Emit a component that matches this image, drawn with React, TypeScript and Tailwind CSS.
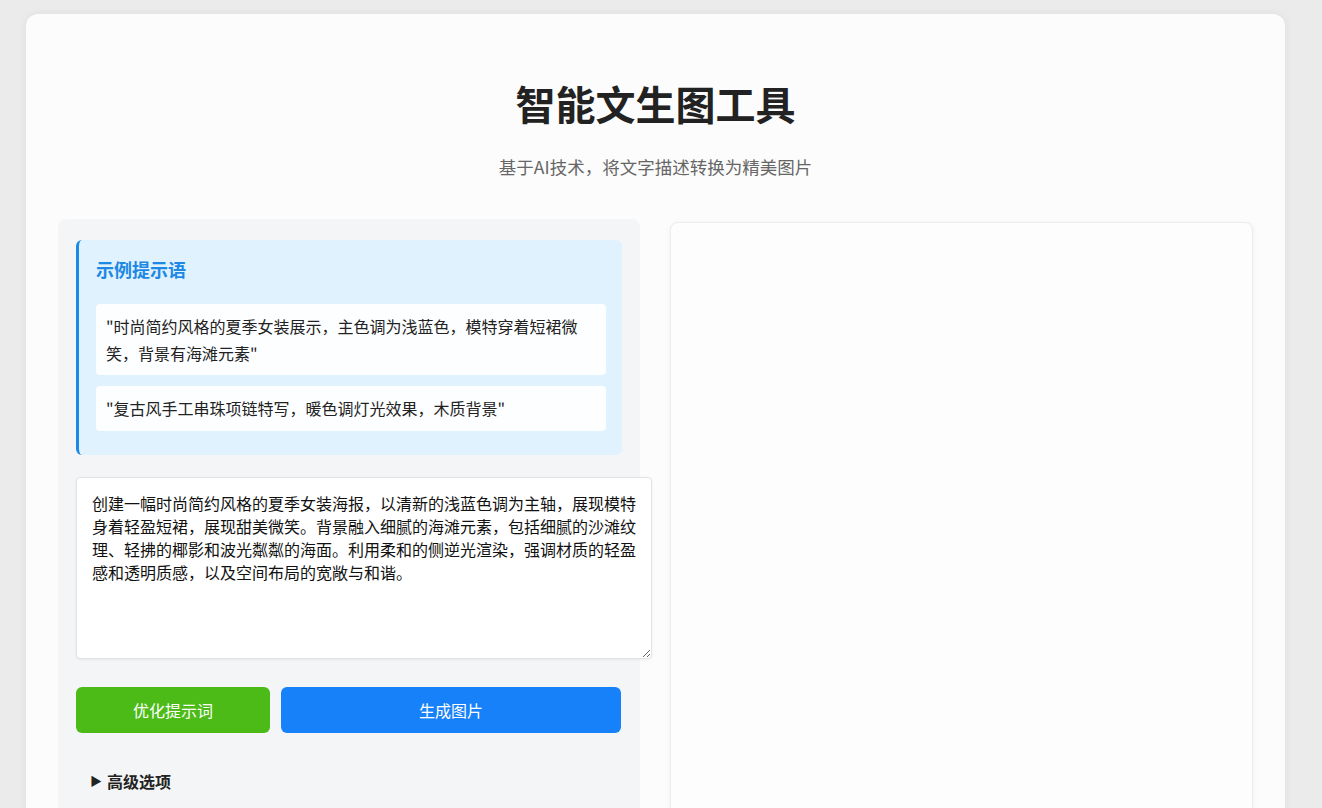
const examples = [
  '"时尚简约风格的夏季女装展示，主色调为浅蓝色，模特穿着短裙微笑，背景有海滩元素"',
  '"复古风手工串珠项链特写，暖色调灯光效果，木质背景"',
];

const prompt =
  "创建一幅时尚简约风格的夏季女装海报，以清新的浅蓝色调为主轴，展现模特身着轻盈短裙，展现甜美微笑。背景融入细腻的海滩元素，包括细腻的沙滩纹理、轻拂的椰影和波光粼粼的海面。利用柔和的侧逆光渲染，强调材质的轻盈感和透明质感，以及空间布局的宽敞与和谐。";

export default function App() {
  return (
    <div
      className="min-h-screen overflow-hidden bg-[#ebebeb] pt-[14px]"
      style={{ fontFamily: '"Noto Sans CJK SC", "Noto Sans", sans-serif' }}
    >
      <div className="ml-[26px] w-[1259px] rounded-[12px] bg-[#fcfcfc] px-[32px] pt-[65px] pb-[40px] shadow-[0_0_10px_rgba(0,0,0,0.06)]">
        <h1 className="text-center text-[40px] leading-[48px] font-bold text-[#222]">智能文生图工具</h1>
        <p className="mt-[28px] text-center text-[17.5px] leading-[24px] text-[#666]">
          基于AI技术，将文字描述转换为精美图片
        </p>

        <div className="mt-[40px] grid grid-cols-[582px_583px] gap-[30px]">
          <div className="rounded-[8px] bg-[#f4f5f6] px-[18px] pt-[21px] pb-[60px]">
            <div className="rounded-[6px] border-l-[3px] border-[#1e88e5] bg-[#dff2fd] pt-[16px] pr-[16px] pb-[24px] pl-[17px]">
              <h3 className="text-[18px] leading-[27px] font-bold text-[#1e88e5]">示例提示语</h3>
              <div className="mt-[21px] flex flex-col gap-[11px]">
                {examples.map((t, i) => (
                  <div
                    key={i}
                    className={`rounded-[4px] bg-[#fdfeff] pl-[10px] pr-[22px] text-[16px] leading-[27px] text-[#222] ${
                      i === 0 ? "py-[8.5px]" : "py-[9px]"
                    }`}
                  >
                    {t}
                  </div>
                ))}
              </div>
            </div>

            <textarea
              defaultValue={prompt}
              className="mt-[22px] block h-[182px] w-[576px] rounded-[4px] border border-[#e3e3e3] bg-white pt-[14px] pr-[8px] pl-[15px] text-[16px] leading-[23px] text-[#111] shadow-[0_1px_3px_rgba(0,0,0,0.06)] outline-none"
            />

            <div className="mt-[28px] flex gap-[11px]">
              <button className="h-[46px] w-[194px] rounded-[6px] bg-[#4cbb17] text-[16px] text-white">优化提示词</button>
              <button className="h-[46px] w-[340px] rounded-[6px] bg-[#1781f9] text-[16px] text-white">生成图片</button>
            </div>

            <div className="mt-[36px] flex items-center gap-[5px] pl-[14px] text-[16px] leading-[24px] font-bold text-[#222]">
              <span className="text-[12px]">▶</span>
              <span>高级选项</span>
            </div>
          </div>

          <div className="mt-[3px] min-h-[640px] rounded-[8px] border border-[#ececec] bg-[#fdfdfd] shadow-[0_1px_6px_rgba(0,0,0,0.05)]" />
        </div>
      </div>
    </div>
  );
}
